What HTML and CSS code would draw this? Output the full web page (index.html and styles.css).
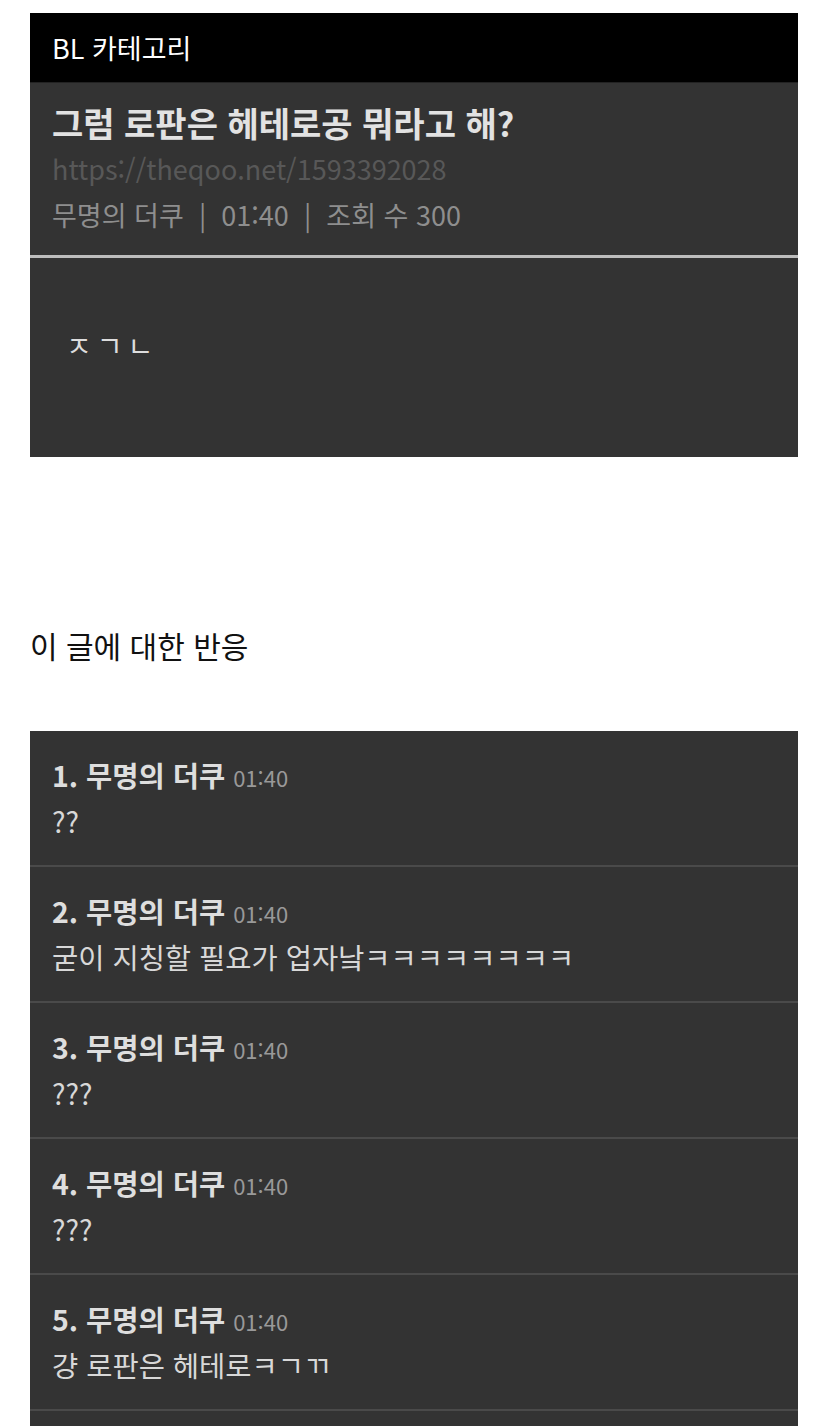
FILE: index.html
```html
<!DOCTYPE html>
<html lang="ko">
<head>
  <meta charset="UTF-8">
  <meta name="viewport" content="width=device-width, initial-scale=1.0">
  <title>그럼 로판은 헤테로공 뭐라고 해?</title>
  <link rel="stylesheet" href="styles.css">
</head>
<body>
  <div class="container">
    <header>BL 카테고리</header>

    <div class="post">
      <div class="post-head">
        <h1>그럼 로판은 헤테로공 뭐라고 해?</h1>
        <div class="url">https://theqoo.net/1593392028</div>
        <div class="meta">무명의 더쿠 &nbsp;|&nbsp; 01:40 &nbsp;|&nbsp; 조회 수 300</div>
      </div>
      <div class="post-body">ㅈㄱㄴ</div>
    </div>

    <h2>이 글에 대한 반응</h2>

    <ul class="comments">
      <li>
        <div class="c-head">1. 무명의 더쿠 <span class="time">01:40</span></div>
        <div class="c-text">??</div>
      </li>
      <li>
        <div class="c-head">2. 무명의 더쿠 <span class="time">01:40</span></div>
        <div class="c-text">굳이 지칭할 필요가 업자낰ㅋㅋㅋㅋㅋㅋㅋㅋ</div>
      </li>
      <li>
        <div class="c-head">3. 무명의 더쿠 <span class="time">01:40</span></div>
        <div class="c-text">???</div>
      </li>
      <li>
        <div class="c-head">4. 무명의 더쿠 <span class="time">01:40</span></div>
        <div class="c-text">???</div>
      </li>
      <li>
        <div class="c-head">5. 무명의 더쿠 <span class="time">01:40</span></div>
        <div class="c-text">걍 로판은 헤테로ㅋㄱㄲ</div>
      </li>
      <li class="more"></li>
    </ul>
  </div>
</body>
</html>
```

FILE: styles.css
```css
body {
  margin: 0;
  padding: 0;
  background: #ffffff;
  font-family: "Noto Sans CJK KR", "Noto Sans", sans-serif;
}
.container { margin: 13px 30px 0; }
header {
  background: #000;
  color: #fff;
  font-size: 27px;
  line-height: 69px;
  padding: 0 22px;
  border-bottom: 1px solid #222;
}
.post { background: #333; }
.post-head {
  padding: 17px 22px 17px;
  border-bottom: 3px solid #bdbdbd;
}
.post-head h1 {
  margin: 0;
  font-size: 34px;
  line-height: 46px;
  color: #e2e2e2;
  font-weight: bold;
}
.url {
  font-size: 27px;
  line-height: 46px;
  color: #585858;
}
.meta {
  font-size: 27px;
  line-height: 46px;
  color: #8e8e8e;
}
.post-body {
  height: 199px;
  box-sizing: border-box;
  padding: 67px 36px 0;
  font-size: 28px;
  letter-spacing: 5px;
  line-height: 40px;
  color: #ddd;
}
h2 {
  margin: 168px 0 66px;
  font-size: 30px;
  line-height: 40px;
  font-weight: normal;
  color: #111;
}
.comments {
  list-style: none;
  margin: 0;
  padding: 0;
  background: #333;
}
.comments li {
  padding: 21px 22px;
  border-bottom: 2px solid #4a4a4a;
}
.comments li.more {
  height: 60px;
  border-bottom: none;
}
.c-head {
  font-size: 28.5px;
  line-height: 46px;
  height: 46px;
  font-weight: bold;
  color: #dedede;
}
.time {
  font-size: 22px;
  line-height: 1;
  font-weight: normal;
  color: #999;
}
.c-text {
  font-size: 28.5px;
  line-height: 46px;
  height: 46px;
  color: #d8d8d8;
}
```
